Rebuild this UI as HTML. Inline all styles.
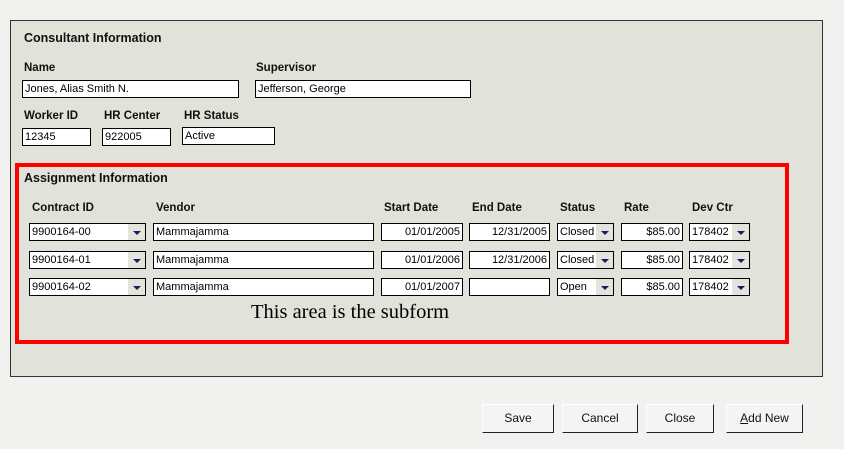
<!DOCTYPE html>
<html><head><style>
body{margin:0;width:844px;height:449px;background:#f1f1ef;position:relative;overflow:hidden;font-family:"Liberation Sans",sans-serif;}
.a{position:absolute;}
#panel{left:10px;top:20px;width:811px;height:355px;background:#e1e2d9;border:1px solid #333;}
.l{position:absolute;font-weight:bold;font-size:11.5px;color:#111;}
.h{font-size:12.5px;}
.f{position:absolute;height:18px;background:#fff;border:1px solid #000;font-size:11px;line-height:16px;padding:0 2px;box-sizing:border-box;white-space:nowrap;overflow:hidden;color:#000;}
.r{text-align:right;}
.dd{position:absolute;right:0;top:0;width:17px;height:16px;background:#e4e4dc;}
.dd:after{content:"";position:absolute;left:5px;top:7px;border-left:4px solid transparent;border-right:4px solid transparent;border-top:4px solid #1a1a6a;}
#red{left:15px;top:163px;width:766px;height:173px;border:4px solid #f00;}
.b{position:absolute;top:404px;height:27px;background:#f4f4f6;border:1px solid #fff;border-right:1px solid #222;border-bottom:1px solid #222;font-size:12px;text-align:center;line-height:27px;color:#111;}
</style></head><body>
<div id="panel" class="a"></div>
<div class="l h" style="left:24px;top:31px">Consultant Information</div>
<div class="l" style="left:24px;top:62px">Name</div>
<div class="l" style="left:256px;top:62px">Supervisor</div>
<div class="f" style="left:22px;top:80px;width:217px">Jones, Alias Smith N.</div>
<div class="f" style="left:255px;top:80px;width:216px">Jefferson, George</div>
<div class="l" style="left:24px;top:110px">Worker ID</div>
<div class="l" style="left:104px;top:110px">HR Center</div>
<div class="l" style="left:184px;top:110px">HR Status</div>
<div class="f" style="left:22px;top:128px;width:69px">12345</div>
<div class="f" style="left:102px;top:128px;width:69px">922005</div>
<div class="f" style="left:182px;top:127px;width:93px">Active</div>
<div id="red" class="a"></div>
<div class="l h" style="left:24px;top:171px">Assignment Information</div>
<div class="l" style="left:32px;top:202px">Contract ID</div>
<div class="l" style="left:156px;top:202px">Vendor</div>
<div class="l" style="left:384px;top:202px">Start Date</div>
<div class="l" style="left:472px;top:202px">End Date</div>
<div class="l" style="left:560px;top:202px">Status</div>
<div class="l" style="left:624px;top:202px">Rate</div>
<div class="l" style="left:692px;top:202px">Dev Ctr</div>

<div class="f" style="left:29px;top:223px;width:117px">9900164-00<span class="dd"></span></div>
<div class="f" style="left:153px;top:223px;width:221px">Mammajamma</div>
<div class="f r" style="left:381px;top:223px;width:82px">01/01/2005</div>
<div class="f r" style="left:469px;top:223px;width:81px">12/31/2005</div>
<div class="f" style="left:557px;top:223px;width:57px">Closed<span class="dd"></span></div>
<div class="f r" style="left:621px;top:223px;width:62px">$85.00</div>
<div class="f" style="left:689px;top:223px;width:61px">178402<span class="dd"></span></div>

<div class="f" style="left:29px;top:251px;width:117px">9900164-01<span class="dd"></span></div>
<div class="f" style="left:153px;top:251px;width:221px">Mammajamma</div>
<div class="f r" style="left:381px;top:251px;width:82px">01/01/2006</div>
<div class="f r" style="left:469px;top:251px;width:81px">12/31/2006</div>
<div class="f" style="left:557px;top:251px;width:57px">Closed<span class="dd"></span></div>
<div class="f r" style="left:621px;top:251px;width:62px">$85.00</div>
<div class="f" style="left:689px;top:251px;width:61px">178402<span class="dd"></span></div>

<div class="f" style="left:29px;top:278px;width:117px">9900164-02<span class="dd"></span></div>
<div class="f" style="left:153px;top:278px;width:221px">Mammajamma</div>
<div class="f r" style="left:381px;top:278px;width:82px">01/01/2007</div>
<div class="f r" style="left:469px;top:278px;width:81px"></div>
<div class="f" style="left:557px;top:278px;width:57px">Open<span class="dd"></span></div>
<div class="f r" style="left:621px;top:278px;width:62px">$85.00</div>
<div class="f" style="left:689px;top:278px;width:61px">178402<span class="dd"></span></div>

<div class="a" style="left:251px;top:301px;font-family:'Liberation Serif',serif;font-size:20.5px;color:#000">This area is the subform</div>

<div class="b" style="left:482px;width:70px">Save</div>
<div class="b" style="left:562px;width:74px">Cancel</div>
<div class="b" style="left:646px;width:66px">Close</div>
<div class="b" style="left:726px;width:75px"><u>A</u>dd New</div>
</body></html>
